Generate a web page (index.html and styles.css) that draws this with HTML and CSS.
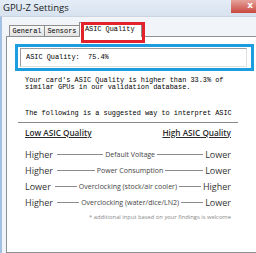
FILE: index.html
```html
<!DOCTYPE html>
<html lang="en">
<head>
    <meta charset="UTF-8">
    <meta name="viewport" content="width=device-width, initial-scale=1.0">
    <title>GPU-Z Settings</title>

    <link rel="stylesheet" href="styles.css">
</head>
<body>
    <div class="window">
        <header class="titlebar">
            <span class="title">GPU-Z Settings</span>
            <span class="close">x</span>
        </header>
        <div class="frame">
            <nav class="tabs">
                <div class="tab">General</div>
                <div class="tab">Sensors</div>
                <div class="tab active">ASIC Quality</div>
                <div class="mark-red"></div>
            </nav>
            <main class="panel">
                <div class="asic-box">
                    <div class="asic-field">ASIC Quality:  75.4%</div>
                </div>
                <p class="mono note">Your card's ASIC Quality is higher than 33.3% of<br>similar GPUs in our validation database.</p>
                <p class="mono lead">The following is a suggested way to interpret ASIC</p>
                <div class="rule"></div>
                <div class="legend">
                    <div class="legend-head">
                        <span>Low ASIC Quality</span>
                        <span>High ASIC Quality</span>
                    </div>
                    <div class="row first">
                        <span class="lbl">Higher</span><i class="dash"></i><span class="mid">Default Voltage</span><i class="dash"></i><span class="lbl">Lower</span>
                    </div>
                    <div class="row">
                        <span class="lbl">Higher</span><i class="dash"></i><span class="mid">Power Consumption</span><i class="dash"></i><span class="lbl">Lower</span>
                    </div>
                    <div class="row">
                        <span class="lbl">Lower</span><i class="dash"></i><span class="mid">Overclocking (stock/air cooler)</span><i class="dash"></i><span class="lbl">Higher</span>
                    </div>
                    <div class="row">
                        <span class="lbl">Higher</span><i class="dash"></i><span class="mid">Overclocking (water/dice/LN2)</span><i class="dash"></i><span class="lbl">Lower</span>
                    </div>
                    <p class="foot">* additional input based on your findings is welcome</p>
                </div>
            </main>
        </div>
    </div>
</body>
</html>
```

FILE: styles.css
```css
* {
    box-sizing: border-box;
}

body {
    width: 256px;
    height: 253px;
    margin: 0;
    overflow: hidden;
    background: #f1f4f8;
    font-family: "Open Sans", Arial, sans-serif;
}

p {
    margin: 0;
}

.window {
    height: 253px;
    display: flex;
    flex-direction: column;
}

.titlebar {
    height: 16px;
    display: flex;
    justify-content: space-between;
    background: linear-gradient(#e4edf7, #d6e2ef);
    padding-left: 3px;
}

.title {
    font-size: 9.5px;
    line-height: 15px;
    color: #1a1a1a;
}

.close {
    width: 25px;
    height: 13px;
    background: linear-gradient(#e6a39c, #c9473f);
    color: #fff;
    font: bold 9px "DejaVu Sans", sans-serif;
    line-height: 10px;
    text-align: right;
    padding-right: 3px;
}

.frame {
    flex: 1;
    display: flex;
    flex-direction: column;
    border-left: 2px solid #a3c1e4;
    border-top: 1px solid #cdd6e0;
    padding: 5px 0 0 4px;
}

.mono,
.tab,
.asic-field {
    font-family: "Liberation Mono", "Courier New", monospace;
    font-size: 6.9px;
    color: #000;
}

.tabs {
    position: relative;
    z-index: 1;
    height: 15px;
    display: flex;
    align-items: flex-end;
    padding-left: 3px;
    margin-bottom: -1px;
}

.tab {
    height: 11px;
    margin-bottom: 1px;
    line-height: 10px;
    padding: 0 2.5px;
    border: 1px solid #8e8e8e;
    border-bottom: none;
    background: linear-gradient(#f7f7f7, #e3e3e3);
}

.tab + .tab {
    margin-left: -1px;
}

.tab.active {
    height: 15px;
    margin-bottom: 0;
    padding: 0 6px 0 5px;
    line-height: 13px;
    background: #fff;
}

.mark-red {
    position: absolute;
    left: 75px;
    top: 0;
    width: 64px;
    height: 21px;
    border: 3px solid #e3232b;
}

.panel {
    flex: 1;
    margin-right: -10px;
    padding: 7px 0 0 8px;
    background: #fff;
    border: 1px solid #8e9193;
}

.asic-box {
    width: 239px;
    padding: 1px 4px 1px 2px;
    border: 3px solid #1c9de0;
}

.asic-field {
    height: 19px;
    line-height: 17px;
    padding-left: 5px;
    white-space: pre;
    border: 1px solid;
    border-color: #9c9c9c #e0e0e0 #e0e0e0 #9c9c9c;
}

.note {
    margin: 5.5px 0 0 10px;
    line-height: 7px;
}

.lead {
    margin: 19px 0 0 10px;
    line-height: 7px;
}

.rule {
    width: 220px;
    height: 1px;
    margin: 5px 0 0 3px;
    background: #8a8a8a;
}

.legend {
    width: 206px;
    margin-left: 10px;
}

.legend-head {
    display: flex;
    justify-content: space-between;
    margin-top: 4px;
    font-size: 8.2px;
    line-height: 11px;
    font-weight: 600;
    color: #2a2a2a;
    text-decoration: underline;
}

.row {
    height: 16px;
    display: flex;
    align-items: center;
    font-size: 9px;
    color: #333;
}

.row.first {
    margin-top: 8.5px;
}

.dash {
    flex: 1;
    height: 1px;
    margin: 1px 2px 0;
    background: #8c8c8c;
}

.lbl + .dash {
    margin-left: 4px;
}

.mid {
    font-size: 7px;
    color: #444;
}

.foot {
    margin-top: 3px;
    text-align: right;
    font-size: 5.8px;
    line-height: 8px;
    color: #888;
}
```
